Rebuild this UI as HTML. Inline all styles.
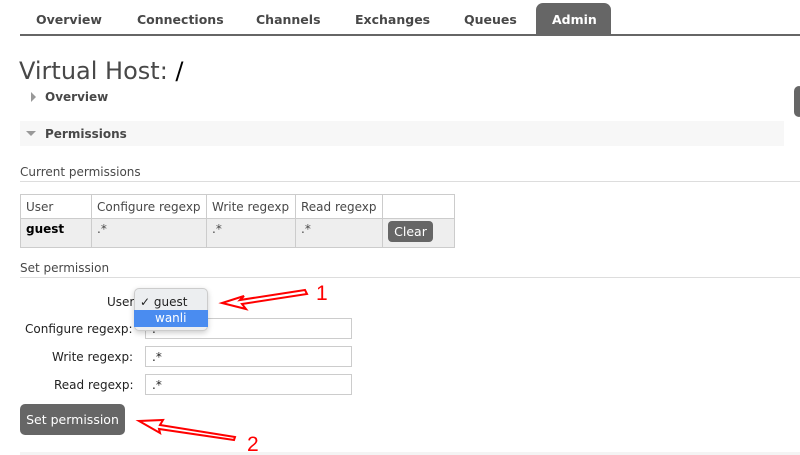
<!DOCTYPE html>
<html><head><meta charset="utf-8"><style>
*{margin:0;padding:0;box-sizing:border-box}
body{width:800px;height:455px;overflow:hidden;background:#fff;font-family:"DejaVu Sans","Liberation Sans",sans-serif;color:#484848;position:relative}
.a{position:absolute;white-space:nowrap}
.nav{font-weight:bold;font-size:12.5px;color:#484848;top:12px}
.b{font-weight:bold;font-size:12px}
.s{font-size:12px}
td{border:1px solid #ccc;font-size:12px;padding:0 5px;vertical-align:top}
input{position:absolute;left:145px;width:207px;height:21px;border:1px solid #ccc;font-size:12px;padding-left:6px;font-family:inherit;color:#222}
</style></head><body>
<div class="a" style="left:20px;top:34px;width:780px;height:2px;background:#666"></div>
<div class="a nav" style="left:36px">Overview</div>
<div class="a nav" style="left:137px">Connections</div>
<div class="a nav" style="left:256px">Channels</div>
<div class="a nav" style="left:355px">Exchanges</div>
<div class="a nav" style="left:464px">Queues</div>
<div class="a" style="left:536px;top:3px;width:75px;height:32px;background:#666;border-radius:7px 7px 0 0"></div>
<div class="a nav" style="left:552px;color:#fff">Admin</div>
<div class="a" style="left:19px;top:57px;font-size:24px;color:#484848">Virtual Host: <span style="color:#000">/</span></div>
<div class="a" style="left:31px;top:92px;width:0;height:0;border-left:5px solid #999;border-top:5px solid transparent;border-bottom:5px solid transparent"></div>
<div class="a b" style="left:45px;top:90px">Overview</div>
<div class="a" style="left:794px;top:86px;width:10px;height:31px;background:#666;border-radius:5px"></div>
<div class="a" style="left:20px;top:121px;width:764px;height:25px;background:#f7f7f7"></div>
<div class="a" style="left:26px;top:131px;width:0;height:0;border-top:5px solid #999;border-left:5px solid transparent;border-right:5px solid transparent"></div>
<div class="a b" style="left:45px;top:127px">Permissions</div>
<div class="a s" style="left:20px;top:165px">Current permissions</div>
<div class="a" style="left:20px;top:181px;width:780px;height:1px;background:#ddd"></div>
<table class="a" style="left:20px;top:194px;border-collapse:collapse;border:1px solid #ccc">
<tr style="height:24px"><td style="width:71px;padding-top:5px">User</td><td style="width:115px;padding-top:5px">Configure regexp</td><td style="width:89px;padding-top:5px">Write regexp</td><td style="width:87px;padding-top:5px">Read regexp</td><td style="width:72px"></td></tr>
<tr style="height:29px;background:#eee"><td style="font-weight:bold;padding-top:3px;color:#000">guest</td><td style="padding-top:3px">.*</td><td style="padding-top:3px">.*</td><td style="padding-top:3px">.*</td><td><div style="margin-top:2px;width:45px;height:21px;background:#666;color:#fff;border-radius:4px;text-align:center;line-height:21px;font-size:12.5px">Clear</div></td></tr>
</table>
<div class="a s" style="left:20px;top:261px">Set permission</div>
<div class="a" style="left:20px;top:277px;width:780px;height:1px;background:#ddd"></div>
<div class="a s" style="left:107px;top:295px;color:#222">User</div>
<div class="a s" style="left:25px;top:322px;color:#222">Configure regexp:</div>
<div class="a s" style="left:52px;top:350px;color:#222">Write regexp:</div>
<div class="a s" style="left:54px;top:378px;color:#222">Read regexp:</div>
<input style="top:318px" value=".*">
<input style="top:346px" value=".*">
<input style="top:374px" value=".*">
<div class="a" style="left:134px;top:288px;width:74px;height:43px;background:#eceef0;border:1px solid #ccc;border-radius:5px;box-shadow:0 2px 6px rgba(0,0,0,.2)"></div>
<div class="a s" style="left:140px;top:295px;color:#222">✓ guest</div>
<div class="a" style="left:134px;top:310px;width:74px;height:17px;background:#4a8cf0"></div>
<div class="a s" style="left:155px;top:311px;color:#fff">wanli</div>
<div class="a" style="left:20px;top:404px;width:105px;height:31px;background:#666;border-radius:5px;color:#fff;font-size:12.5px;text-align:center;line-height:31px">Set permission</div>
<div class="a" style="left:20px;top:452px;width:780px;height:3px;background:#f4f4f4"></div>
<svg class="a" style="left:0;top:0" width="800" height="455">
<path d="M305 290 L240 300 L244 296 L222 303 L246 309 L242 304 L307 294 Z" fill="none" stroke="#f00" stroke-width="2"/>
<path d="M235 437 L160 425 L163 420 L139 421 L160 433 L159 429 L234 440 Z" fill="none" stroke="#f00" stroke-width="2"/>
<text x="316" y="300" fill="#f00" font-size="21" font-family="Liberation Sans">1</text>
<text x="247" y="451" fill="#f00" font-size="21" font-family="Liberation Sans">2</text>
</svg>
</body></html>
